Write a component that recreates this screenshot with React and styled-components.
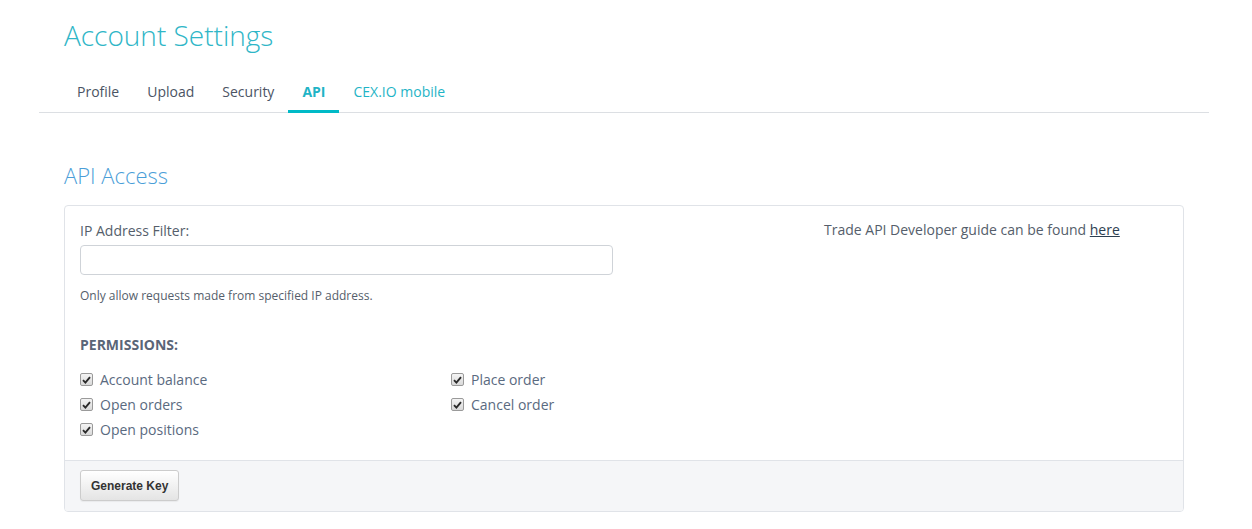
import React from "react";
import styled, { createGlobalStyle } from "styled-components";

const GlobalStyle = createGlobalStyle`
    body {
        margin: 0;
        background: #fff;
        font-family: "Open Sans", "Liberation Sans", sans-serif;
        color: #555e6b;
    }
`;

const Page = styled.div`
    width: 1170px;
    margin-left: 39px;
`;

const PageTitle = styled.h1`
    margin: 15px 0 0 25px;
    font-size: 28px;
    line-height: 40px;
    font-weight: 300;
    color: #2fb6c7;
`;

const Tabs = styled.nav`
    display: flex;
    margin-top: 19px;
    padding-left: 24px;
    border-bottom: 1px solid #dcdfe3;
`;

const Tab = styled.a`
    display: block;
    padding: 8px 14px 8px;
    margin-bottom: -1px;
    font-size: 14px;
    line-height: 20px;
    font-weight: ${(p) => (p.$active ? 700 : 400)};
    color: ${(p) => (p.$active || p.$link ? "#1fb4c6" : "#4b5464")};
    border-bottom: 3px solid ${(p) => (p.$active ? "#00bac7" : "transparent")};
    cursor: pointer;
`;

const SectionTitle = styled.h2`
    margin: 47px 0 15px 25px;
    font-size: 22px;
    line-height: 30px;
    font-weight: 300;
    color: #4a9ed8;
`;

const Panel = styled.div`
    margin: 0 25px;
    border: 1px solid #e0e3e8;
    border-radius: 4px;
    overflow: hidden;
`;

const PanelBody = styled.div`
    display: grid;
    grid-template-columns: 744px 1fr;
    padding: 15px 15px 18px;
`;

const Label = styled.label`
    display: block;
    font-size: 14px;
    line-height: 20px;
    color: #555e6b;
    margin-bottom: 4px;
`;

const TextInput = styled.input`
    display: block;
    box-sizing: border-box;
    width: 533px;
    height: 30px;
    border: 1px solid #cfd3d8;
    border-radius: 4px;
    outline: none;
`;

const Help = styled.p`
    margin: 13px 0 0;
    font-size: 12px;
    line-height: 16px;
    color: #555e6b;
`;

const PermTitle = styled.h4`
    margin: 32px 0 0;
    font-size: 14px;
    line-height: 18px;
    font-weight: 700;
    color: #5a6577;
`;

const PermGrid = styled.div`
    display: grid;
    grid-template-columns: 371px 1fr;
    grid-template-rows: repeat(3, 25px);
    margin-top: 13px;
`;

const Check = styled.label`
    display: flex;
    align-items: center;
    gap: 7px;
    font-size: 14px;
    color: #5a6a80;
    grid-column: ${(p) => p.$col};
    grid-row: ${(p) => p.$row};
`;

const Box = styled.span`
    box-sizing: border-box;
    width: 13px;
    height: 13px;
    border: 1px solid #9a9a9a;
    border-radius: 2px;
    background: linear-gradient(#f4f4f4, #d9d9d9);
    display: flex;
    align-items: center;
    justify-content: center;
`;

const Guide = styled.div`
    font-size: 14px;
    line-height: 20px;
    margin-top: -1px;
    color: #555e6b;

    a {
        color: #2c3e50;
        text-decoration: underline;
    }
`;

const PanelFooter = styled.div`
    background: #f5f6f8;
    border-top: 1px solid #e0e3e8;
    padding: 9px 15px 10px;
`;

const Button = styled.button`
    height: 31px;
    padding: 0 10px;
    font-family: "Liberation Sans", Arial, sans-serif;
    font-size: 12px;
    font-weight: 700;
    color: #333;
    background: linear-gradient(#ffffff, #e4e4e4);
    border: 1px solid #cccccc;
    border-radius: 3px;
    box-shadow: inset 0 1px 0 rgba(255, 255, 255, 0.15), 0 1px 1px rgba(0, 0, 0, 0.05);
`;

const CheckMark = () => (
    <Box>
        <svg width="9" height="8" viewBox="0 0 9 8">
            <path d="M1 4.2 L3.4 6.6 L8 1.2" fill="none" stroke="#2a2a2a" strokeWidth="1.9" />
        </svg>
    </Box>
);

const permissions = [
    { label: "Account balance", col: 1, row: 1 },
    { label: "Open orders", col: 1, row: 2 },
    { label: "Open positions", col: 1, row: 3 },
    { label: "Place order", col: 2, row: 1 },
    { label: "Cancel order", col: 2, row: 2 },
];

export default function App() {
    return (
        <>
            <GlobalStyle />
            <Page>
                <PageTitle>Account Settings</PageTitle>
                <Tabs>
                    <Tab>Profile</Tab>
                    <Tab>Upload</Tab>
                    <Tab>Security</Tab>
                    <Tab $active>API</Tab>
                    <Tab $link>CEX.IO mobile</Tab>
                </Tabs>
                <SectionTitle>API Access</SectionTitle>
                <Panel>
                    <PanelBody>
                        <div>
                            <Label>IP Address Filter:</Label>
                            <TextInput type="text" />
                            <Help>Only allow requests made from specified IP address.</Help>
                            <PermTitle>PERMISSIONS:</PermTitle>
                            <PermGrid>
                                {permissions.map((p) => (
                                    <Check key={p.label} $col={p.col} $row={p.row}>
                                        <CheckMark />
                                        {p.label}
                                    </Check>
                                ))}
                            </PermGrid>
                        </div>
                        <Guide>
                            Trade API Developer guide can be found <a>here</a>
                        </Guide>
                    </PanelBody>
                    <PanelFooter>
                        <Button>Generate Key</Button>
                    </PanelFooter>
                </Panel>
            </Page>
        </>
    );
}
